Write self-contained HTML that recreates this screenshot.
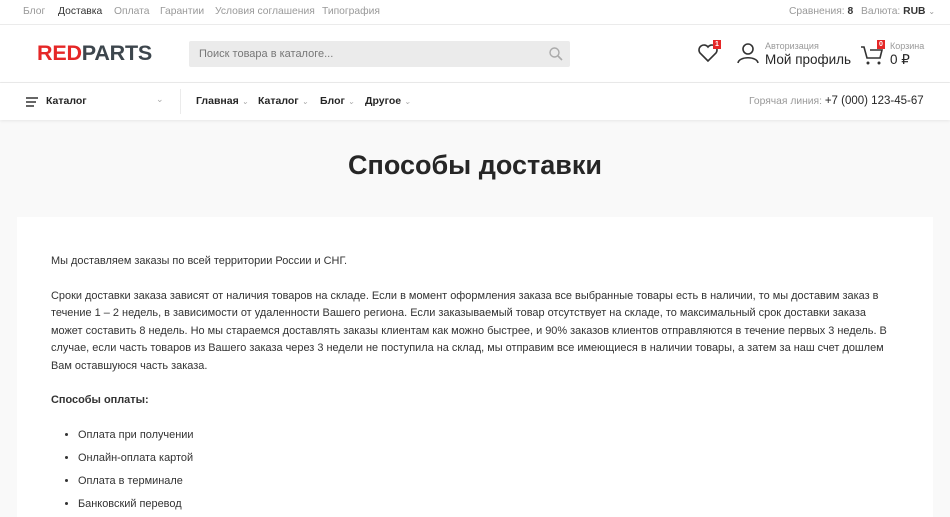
<!DOCTYPE html>
<html><head><meta charset="utf-8"><style>
*{margin:0;padding:0;box-sizing:border-box}
body{width:950px;height:500px;overflow:hidden;background:#f9f9f9;font-family:"Liberation Sans",Arial,sans-serif;color:#262626}
.top{height:25px;background:#fff;border-bottom:1px solid #ebebeb;font-size:10.3px;color:#999;position:relative}
.top span{position:absolute;top:6px;white-space:nowrap}
.hdr{height:58px;background:#fff;border-bottom:1px solid #ebebeb;position:relative}
.nav{height:37px;background:#fff;position:relative;box-shadow:0 1px 3px rgba(0,0,0,.08);font-size:10.5px;font-weight:bold}
.nav span{position:absolute;top:12px;white-space:nowrap}
.chev{color:#aaa;font-weight:normal;font-size:8px;margin-left:3px}
h1{position:absolute;top:150px;width:950px;text-align:center;font-size:27px;font-weight:bold;color:#262626}
.card{position:absolute;left:17px;top:217px;width:916px;height:300px;background:#fff;padding:36px 34px;font-size:10.95px;line-height:17.5px;color:#333}
.card p{margin-bottom:17px}
.card ul{margin-left:27px;list-style:disc}
.card li{margin-bottom:5.5px}
</style></head><body>
<div class="top">
<span style="left:23px">Блог</span><span style="left:58px;color:#333">Доставка</span><span style="left:114px">Оплата</span><span style="left:160px">Гарантии</span><span style="left:215px">Условия соглашения</span><span style="left:322px">Типография</span>
<span style="left:789px">Сравнения: <b style="color:#333">8</b></span><span style="left:861px">Валюта: <b style="color:#333">RUB</b> <span style="position:static;font-size:8px">⌄</span></span>
</div>
<div class="hdr">
<div style="position:absolute;left:37px;top:16px;font-size:21.5px;font-weight:bold;letter-spacing:-.2px"><span style="color:#e52727">RED</span><span style="color:#3d464d">PARTS</span></div>
<div style="position:absolute;left:189px;top:16px;width:381px;height:26px;background:#ebebeb;border-radius:2px;font-size:11px;color:#777;padding:7px 10px">Поиск товара в каталоге...</div>
<svg style="position:absolute;left:549px;top:22px" width="14" height="14" viewBox="0 0 14 14"><circle cx="5.5" cy="5.5" r="4.5" fill="none" stroke="#aaa" stroke-width="1.4"/><path d="M9 9l4 4" stroke="#aaa" stroke-width="1.6"/></svg>
<svg style="position:absolute;left:697px;top:18px" width="22" height="20" viewBox="0 0 22 20"><path d="M11 18L3 10A5 5 0 0 1 11 4A5 5 0 0 1 19 10Z" fill="none" stroke="#333" stroke-width="1.6"/></svg>
<div style="position:absolute;left:713px;top:15px;background:#e52727;color:#fff;font-size:7px;font-weight:bold;padding:0 2px;line-height:9px">1</div>
<svg style="position:absolute;left:737px;top:17px" width="22" height="22" viewBox="0 0 22 22"><circle cx="11" cy="7" r="5" fill="none" stroke="#333" stroke-width="1.6"/><path d="M1 21C2 14 20 14 21 21" fill="none" stroke="#333" stroke-width="1.6"/></svg>
<div style="position:absolute;left:765px;top:16px;font-size:9px;color:#999">Авторизация</div>
<div style="position:absolute;left:765px;top:27px;font-size:13.5px;color:#262626;white-space:nowrap">Мой профиль</div>
<svg style="position:absolute;left:860px;top:20px" width="24" height="22" viewBox="0 0 24 22"><path d="M1 2h3l3 11h13l2-8H10" fill="none" stroke="#333" stroke-width="1.6"/><circle cx="8" cy="18" r="1.5" fill="#333"/><circle cx="19" cy="18" r="1.5" fill="#333"/></svg>
<div style="position:absolute;left:877px;top:15px;background:#e52727;color:#fff;font-size:7px;font-weight:bold;padding:0 2px;line-height:9px">0</div>
<div style="position:absolute;left:890px;top:16px;font-size:9px;color:#999">Корзина</div>
<div style="position:absolute;left:890px;top:27px;font-size:13.5px">0 ₽</div>
</div>
<div class="nav">
<svg style="position:absolute;left:26px;top:14px" width="12" height="10"><path d="M0 1h12M0 5h10M0 9h8" stroke="#333" stroke-width="1.5"/></svg>
<span style="left:46px">Каталог</span><span style="left:156px;font-weight:normal;color:#aaa;font-size:9px;top:11px">⌄</span>
<div style="position:absolute;left:180px;top:6px;width:1px;height:25px;background:#ebebeb"></div>
<span style="left:196px">Главная<i class="chev">⌄</i></span><span style="left:258px">Каталог<i class="chev">⌄</i></span><span style="left:320px">Блог<i class="chev">⌄</i></span><span style="left:365px">Другое<i class="chev">⌄</i></span>
<span style="left:749px;font-weight:normal;color:#999;font-size:10.3px">Горячая линия: <span style="position:static;color:#262626;font-size:11.5px">+7 (000) 123-45-67</span></span>
</div>
<h1>Способы доставки</h1>
<div class="card">
<p>Мы доставляем заказы по всей территории России и СНГ.</p>
<p>Сроки доставки заказа зависят от наличия товаров на складе. Если в момент оформления заказа все выбранные товары есть в наличии, то мы доставим заказ в течение 1 – 2 недель, в зависимости от удаленности Вашего региона. Если заказываемый товар отсутствует на складе, то максимальный срок доставки заказа может составить 8 недель. Но мы стараемся доставлять заказы клиентам как можно быстрее, и 90% заказов клиентов отправляются в течение первых 3 недель. В случае, если часть товаров из Вашего заказа через 3 недели не поступила на склад, мы отправим все имеющиеся в наличии товары, а затем за наш счет дошлем Вам оставшуюся часть заказа.</p>
<p><b>Способы оплаты:</b></p>
<ul><li>Оплата при получении</li><li>Онлайн-оплата картой</li><li>Оплата в терминале</li><li>Банковский перевод</li></ul>
</div>
</body></html>
